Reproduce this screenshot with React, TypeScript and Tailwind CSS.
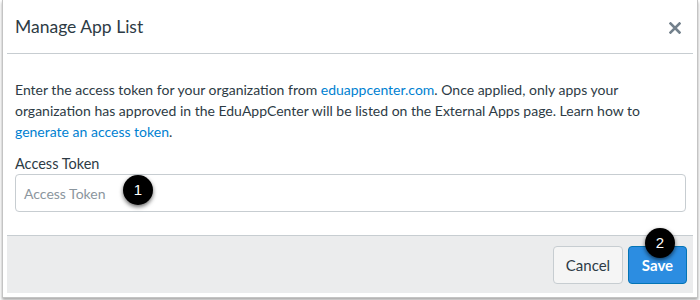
export default function App() {
  return (
    <div className="w-[700px] h-[300px] bg-white" style={{ fontFamily: "Lato, 'Noto Sans', sans-serif" }}>
      <div className="ml-[2px] w-[696px] border-x border-b border-[#c4c4c4] px-[4px] pb-[4px] shadow-[0_2px_3px_rgba(0,0,0,0.35)]">
        <div className="w-[686px] flex flex-col">
          <div className="h-[54px] flex items-center justify-between pl-[8px] pr-[12px] border-b border-[#c7cdd1]">
            <h2 className="text-[17.5px] text-[#2d3b45] leading-none">Manage App List</h2>
            <svg width="12" height="12" viewBox="0 0 12 12" className="mt-[2px]">
              <path d="M1.5 1.5 L10.5 10.5 M10.5 1.5 L1.5 10.5" stroke="#73818c" strokeWidth="2.6" strokeLinecap="square" />
            </svg>
          </div>
          <div className="relative pl-[8px] pr-[7px] pt-[25px] h-[181px]">
            <p className="text-[14px] leading-[21px] text-[#2d3b45]">
              Enter the access token for your organization from <a className="text-[#0081d1]">eduappcenter.com</a>. Once applied, only apps your
              <br />
              organization has approved in the EduAppCenter will be listed on the External Apps page. Learn how to
              <br />
              <a className="text-[#0081d1]">generate an access token</a>.
            </p>
            <label className="block mt-[12px] text-[14.5px] leading-[20px] text-[#2d3b45]">Access Token</label>
            <div className="mt-[0px] h-[38px] border border-[#c7cdd1] rounded-[4px] flex items-center pl-[8px] text-[14px] text-[#8b969e]">
              Access Token
            </div>
            <div className="absolute left-[116px] top-[121px] w-[30px] h-[30px] rounded-full bg-black text-white text-[15px] flex items-center justify-center shadow-[0_2px_4px_rgba(0,0,0,0.6)]" style={{ fontFamily: "'Liberation Sans', Arial, sans-serif" }}>
              1
            </div>
          </div>
          <div className="relative h-[58px] bg-[#ebeced] border-t border-[#c7cdd1] flex items-center justify-end gap-[5px] pr-[6px] pt-[1px]">
            <button className="h-[38px] w-[70px] rounded-[4px] border border-[#c7cdd1] bg-[#f5f5f5] text-[15px] text-[#2d3b45]">Cancel</button>
            <button className="h-[38px] w-[59px] rounded-[4px] border border-[#0374b5] bg-[#2c8de1] text-[15px] font-bold text-white">Save</button>
            <div className="absolute left-[638px] top-[-8px] w-[30px] h-[30px] rounded-full bg-black text-white text-[15px] flex items-center justify-center shadow-[0_2px_4px_rgba(0,0,0,0.6)]" style={{ fontFamily: "'Liberation Sans', Arial, sans-serif" }}>
              2
            </div>
          </div>
        </div>
      </div>
    </div>
  );
}
